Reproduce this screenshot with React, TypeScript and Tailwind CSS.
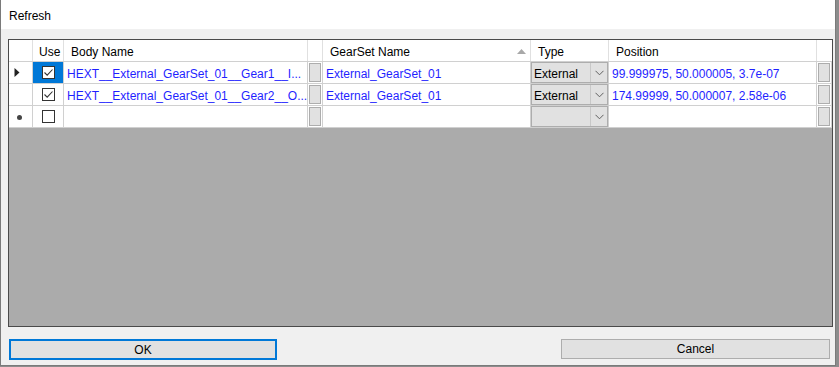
import React from "react";

const FONT = { fontFamily: '"Liberation Sans", Arial, sans-serif' };

function Check({ checked }: { checked: boolean }) {
  return (
    <div className="w-[13px] h-[13px] border border-[#333333] bg-white flex items-center justify-center">
      {checked && (
        <svg width="11" height="11" viewBox="0 0 11 11">
          <path d="M1.5 5.5 L4.2 8.2 L9.5 2.5" fill="none" stroke="#333" strokeWidth="1.1" />
        </svg>
      )}
    </div>
  );
}

function BtnCell() {
  return (
    <div className="w-[15px] h-full border-r border-[#d0d0d0] bg-white p-[1px] shrink-0">
      <div className="w-full h-full bg-[#e1e1e1] border border-[#adadad]" />
    </div>
  );
}

function Chevron() {
  return (
    <svg width="9" height="6" viewBox="0 0 9 6">
      <path d="M0.5 0.8 L4.5 4.8 L8.5 0.8" fill="none" stroke="#606060" strokeWidth="1" />
    </svg>
  );
}

function TypeCell({ value }: { value: string }) {
  return (
    <div className="w-[78px] h-full border-r border-[#d0d0d0] bg-white shrink-0">
      <div className="w-full h-full bg-[#e1e1e1] border border-[#adadad] flex">
        <div className="flex-1 pl-[2px] pt-[2px] flex items-center text-black border-r border-[#c8c8c8]">{value}</div>
        <div className="w-[16px] flex items-center justify-center">
          <Chevron />
        </div>
      </div>
    </div>
  );
}

type Row = { marker: "arrow" | "star" | "none"; sel?: boolean; checked: boolean; body: string; gear: string; type: string; pos: string };

const rows: Row[] = [
  { marker: "arrow", sel: true, checked: true, body: "HEXT__External_GearSet_01__Gear1__I...", gear: "External_GearSet_01", type: "External", pos: "99.999975, 50.000005, 3.7e-07" },
  { marker: "none", checked: true, body: "HEXT__External_GearSet_01__Gear2__O...", gear: "External_GearSet_01", type: "External", pos: "174.99999, 50.000007, 2.58e-06" },
  { marker: "star", checked: false, body: "", gear: "", type: "", pos: "" },
];

export default function App() {
  return (
    <div className="w-[839px] h-[367px] bg-[#8c8c8c] text-[12px]" style={FONT}>
      <div className="w-[836px] h-[366px] bg-[#f0f0f0] border-l border-r border-b border-[#7a7a7a] flex flex-col">
        <div className="h-[29px] bg-white pl-[8px] pt-[9px] text-black leading-[15px]">Refresh</div>
        <div className="flex-1 pl-[7px] pt-[10px] flex flex-col">
          <div className="w-[825px] h-[288px] border border-[#4a4a4a] bg-[#ababab] flex flex-col">
            {/* header */}
            <div className="h-[22px] bg-white flex border-b border-[#d0d0d0] text-black">
              <div className="w-[24px] border-r border-[#e0e0e0] shrink-0" />
              <div className="w-[31px] border-r border-[#e0e0e0] pl-[6px] pt-[2px] flex items-center shrink-0">Use</div>
              <div className="w-[244px] border-r border-[#e0e0e0] pl-[7px] pt-[2px] flex items-center shrink-0">Body Name</div>
              <div className="w-[15px] border-r border-[#e0e0e0] shrink-0" />
              <div className="w-[208px] border-r border-[#e0e0e0] pl-[7px] pt-[2px] flex items-center justify-between pr-[4px] shrink-0">
                <span>GearSet Name</span>
                <svg width="9" height="5" viewBox="0 0 9 5"><path d="M0 5 L4.5 0 L9 5 Z" fill="#a8a8a8" /></svg>
              </div>
              <div className="w-[78px] border-r border-[#e0e0e0] pl-[7px] pt-[2px] flex items-center shrink-0">Type</div>
              <div className="w-[208px] border-r border-[#e0e0e0] pl-[7px] pt-[2px] flex items-center shrink-0">Position</div>
              <div className="flex-1" />
            </div>
            {rows.map((r, i) => (
              <div key={i} className="h-[22px] flex border-b border-[#d0d0d0] bg-white">
                <div className="w-[24px] border-r border-[#d0d0d0] flex items-center pl-[5px] shrink-0">
                  {r.marker === "arrow" && (
                    <svg width="6" height="9" viewBox="0 0 6 9"><path d="M0.5 0 L5.5 4.5 L0.5 9 Z" fill="#222" /></svg>
                  )}
                  {r.marker === "star" && <div className="w-[5px] h-[5px] rounded-full bg-[#444] ml-[3px] mt-[2px]" />}
                </div>
                <div className={`w-[31px] border-r border-[#d0d0d0] flex items-center justify-center shrink-0 ${r.sel ? "bg-[#0078d7]" : ""}`}>
                  <Check checked={r.checked} />
                </div>
                <div className="w-[244px] border-r border-[#d0d0d0] pl-[3px] pt-[2px] flex items-center whitespace-nowrap overflow-hidden text-[#1f1fff] shrink-0">
                  {r.body}
                </div>
                <BtnCell />
                <div className="w-[208px] border-r border-[#d0d0d0] pl-[3px] pt-[2px] flex items-center whitespace-nowrap overflow-hidden text-[#1f1fff] shrink-0">
                  {r.gear}
                </div>
                <TypeCell value={r.type} />
                <div className="w-[208px] border-r border-[#d0d0d0] pl-[3px] pt-[2px] flex items-center whitespace-nowrap overflow-hidden text-[#1f1fff] shrink-0">
                  {r.pos}
                </div>
                <BtnCell />
                <div className="flex-1 bg-[#ababab]" />
              </div>
            ))}
            <div className="flex-1" />
          </div>
          <div className="mt-[12px] flex justify-between items-start w-[821px] ml-[1px]">
            <button className="w-[268px] h-[21px] bg-[#e1e1e1] border-2 border-[#0078d7] text-black flex items-center justify-center">OK</button>
            <button className="w-[269px] h-[20px] bg-[#e1e1e1] border border-[#adadad] text-black flex items-center justify-center">Cancel</button>
          </div>
        </div>
      </div>
    </div>
  );
}
